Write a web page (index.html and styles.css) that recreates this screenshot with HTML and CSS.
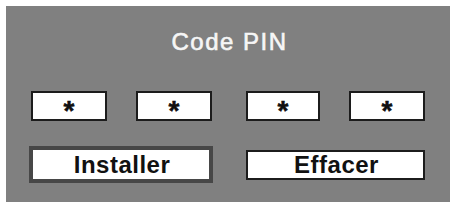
FILE: index.html
```html
<!DOCTYPE html>
<html lang="fr">
<head>
<meta charset="utf-8">
<title>Code PIN</title>
<link rel="stylesheet" href="styles.css">
</head>
<body>
<div class="panel">
  <div class="title">Code PIN</div>
  <div class="pin-row">
    <div class="pin-group">
      <div class="pin">*</div>
      <div class="pin">*</div>
    </div>
    <div class="pin-group">
      <div class="pin narrow">*</div>
      <div class="pin">*</div>
    </div>
  </div>
  <div class="btn-row">
    <div class="btn-slot left"><div class="btn selected">Installer</div></div>
    <div class="btn-slot right"><div class="btn">Effacer</div></div>
  </div>
</div>
</body>
</html>
```
FILE: styles.css
```css
html, body {
  margin: 0;
  padding: 0;
  background: #ffffff;
}
body {
  font-family: "Liberation Sans", Arial, sans-serif;
}
.panel {
  margin: 6px;
  width: 444px;
  height: 196px;
  box-sizing: border-box;
  background: #808080;
  padding: 22px 25px 0 23px;
}
.title {
  color: #f6f6f6;
  font-size: 24px;
  line-height: 28px;
  letter-spacing: 1.5px;
  text-align: center;
  padding-left: 5px;
  -webkit-text-stroke: 0.6px #f6f6f6;
}
.pin-row {
  margin-top: 35px;
  display: flex;
  gap: 33px;
}
.pin-group {
  display: flex;
  justify-content: space-between;
}
.pin-group:first-child {
  width: 181px;
  padding: 0 1px 0 2px;
}
.pin-group:last-child {
  width: 179px;
}
.pin {
  width: 76px;
  height: 30px;
  box-sizing: border-box;
  border: 2px solid #1c1c1c;
  background: #ffffff;
  color: #111111;
  font-weight: bold;
  font-size: 28px;
  line-height: 24px;
  text-align: center;
  padding-top: 6px;
  -webkit-text-stroke: 0.5px #111111;
}
.pin.narrow {
  width: 74px;
}
.btn-row {
  margin-top: 25px;
  display: flex;
  gap: 33px;
  align-items: center;
}
.btn-slot.left {
  width: 184px;
}
.btn-slot.right {
  width: 179px;
}
.btn {
  box-sizing: border-box;
  height: 30px;
  border: 2px solid #1c1c1c;
  background: #ffffff;
  color: #111111;
  font-weight: bold;
  font-size: 24px;
  letter-spacing: 0.5px;
  display: flex;
  align-items: center;
  justify-content: center;
  padding-left: 2px;
}
.btn.selected {
  height: 37px;
  border: 4px solid #474747;
}
```
